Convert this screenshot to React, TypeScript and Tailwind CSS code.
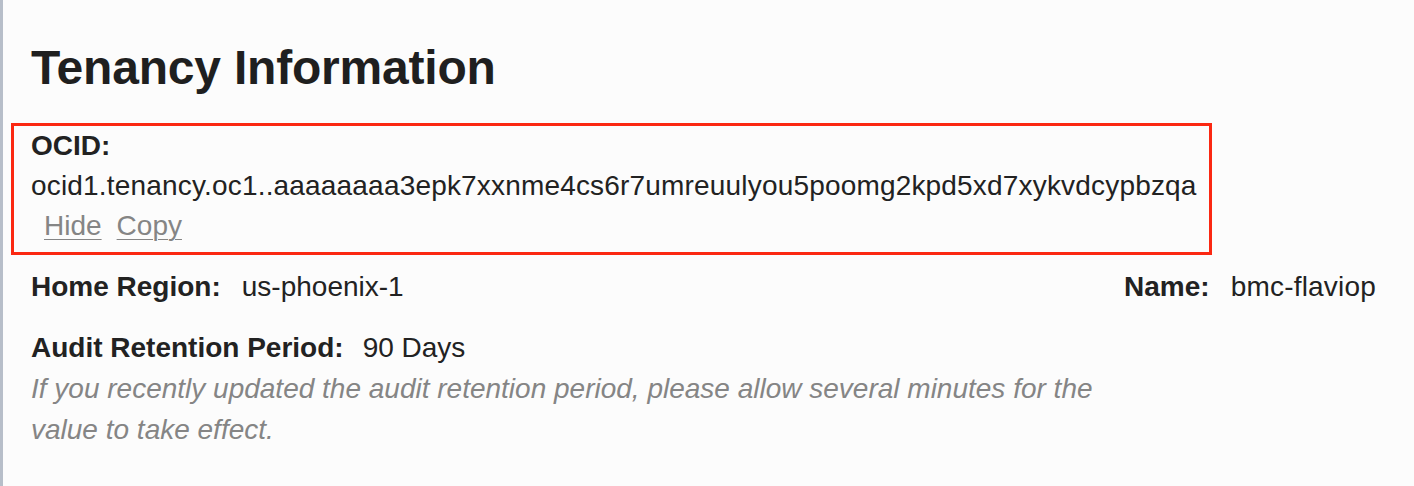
import React from "react";

export default function App() {
  return (
    <div
      className="w-[1414px] h-[486px] bg-[#fcfcfc] flex text-[#222222] overflow-hidden"
      style={{ fontFamily: '"Liberation Sans", Arial, Helvetica, sans-serif' }}
    >
      <div className="w-[3px] h-full bg-[#b7bec9] shrink-0" />
      <div className="flex-1 flex flex-col pl-[8px] pr-[38px]">
        <h1 className="mt-[40px] pl-[20px] h-[56px] text-[48px] leading-[56px] font-bold tracking-[-0.2px] text-[#1f1f1f]">
          Tenancy Information
        </h1>
        <div className="mt-[27px] w-[1201px] h-[132px] border-[3px] border-[#fb2812] pl-[17px] text-[28px] leading-[40px]">
          <div className="font-bold">OCID:</div>
          <div className="whitespace-nowrap tracking-[0.18px]">
            ocid1.tenancy.oc1..aaaaaaaa3epk7xxnme4cs6r7umreuulyou5poomg2kpd5xd7xykvdcypbzqa
          </div>
          <div className="flex gap-[15px] pl-[13px] text-[#858585]">
            <span className="underline decoration-1 underline-offset-[4px]">Hide</span>
            <span className="underline decoration-1 underline-offset-[4px]">Copy</span>
          </div>
        </div>
        <div className="mt-[12px] pl-[20px] flex justify-between text-[28px] leading-[40px]">
          <div className="flex gap-[21px]">
            <span className="font-bold">Home Region:</span>
            <span>us-phoenix-1</span>
          </div>
          <div className="flex gap-[21px]">
            <span className="font-bold">Name:</span>
            <span className="tracking-[0.2px]">bmc-flaviop</span>
          </div>
        </div>
        <div className="mt-[21px] pl-[20px] flex gap-[19px] text-[28px] leading-[40px]">
          <span className="font-bold">Audit Retention Period:</span>
          <span>90 Days</span>
        </div>
        <p className="pl-[20px] w-[1120px] text-[28px] leading-[41px] italic text-[#858585]">
          If you recently updated the audit retention period, please allow several minutes for the
          value to take effect.
        </p>
      </div>
    </div>
  );
}
